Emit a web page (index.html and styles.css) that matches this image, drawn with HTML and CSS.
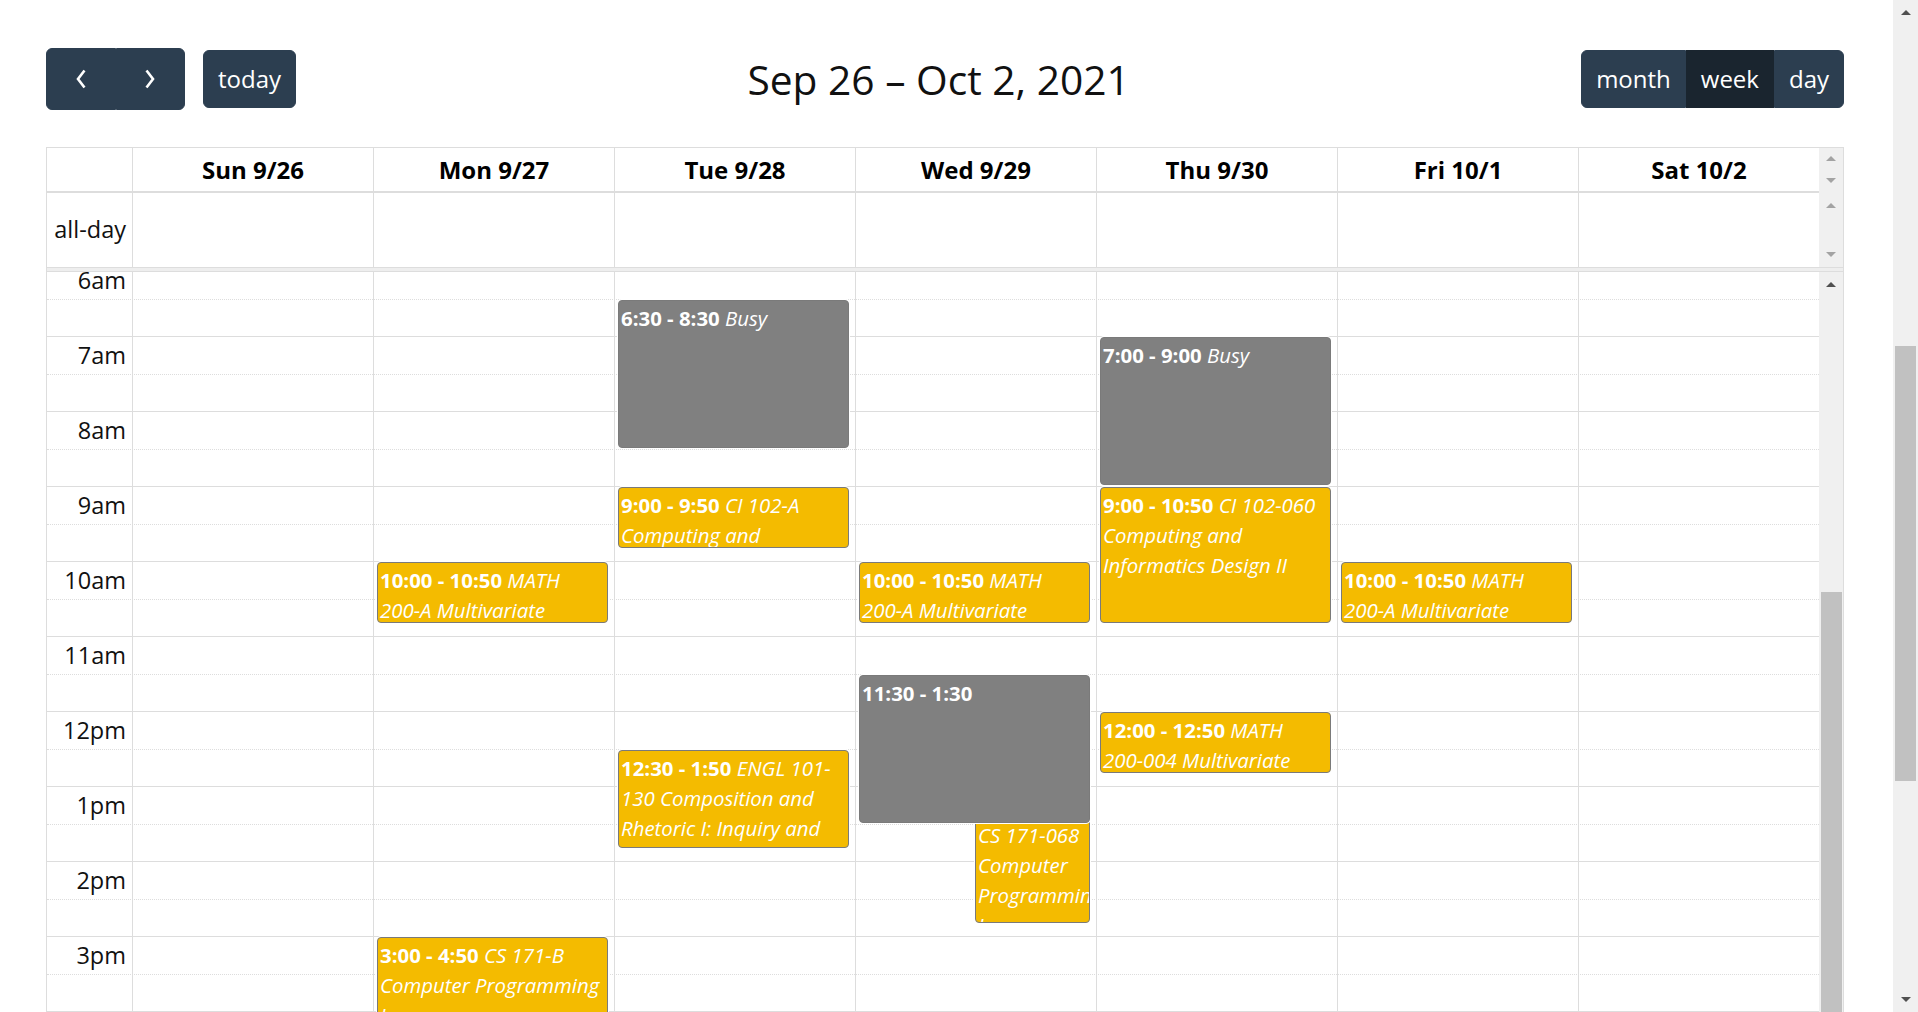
FILE: index.html
```html
<!DOCTYPE html>
<html lang="en">
<head>
<meta charset="utf-8">
<title>Week schedule</title>
<link rel="stylesheet" href="styles.css">
</head>
<body>
<div class="page">
  <main class="main">
    <div class="toolbar">
      <div class="tb-chunk">
        <div class="btn-group">
          <button class="btn btn-icon" aria-label="prev"><svg width="10" height="20" viewBox="0 0 10 20"><polyline points="8.5,1.5 2,10 8.5,18.5" fill="none" stroke="#fff" stroke-width="2.6"/></svg></button>
          <button class="btn btn-icon" aria-label="next"><svg width="10" height="20" viewBox="0 0 10 20"><polyline points="1.5,1.5 8,10 1.5,18.5" fill="none" stroke="#fff" stroke-width="2.6"/></svg></button>
        </div>
        <button class="btn">today</button>
      </div>
      <h2 class="title">Sep 26 – Oct 2, 2021</h2>
      <div class="tb-chunk">
        <div class="btn-group">
          <button class="btn">month</button>
          <button class="btn active">week</button>
          <button class="btn">day</button>
        </div>
      </div>
    </div>

    <div class="cal">
      <div class="row head">
        <div class="axis"></div>
        <div class="day-h">Sun 9/26</div>
        <div class="day-h">Mon 9/27</div>
        <div class="day-h">Tue 9/28</div>
        <div class="day-h">Wed 9/29</div>
        <div class="day-h">Thu 9/30</div>
        <div class="day-h">Fri 10/1</div>
        <div class="day-h">Sat 10/2</div>
        <div class="gutter gutter-head">
          <span class="sb-btn small"><span class="tri up light"></span></span>
          <span class="sb-btn small"><span class="tri down light"></span></span>
        </div>
      </div>
      <div class="row allday">
        <div class="axis allday-label">all-day</div>
        <div class="day-c"></div>
        <div class="day-c"></div>
        <div class="day-c"></div>
        <div class="day-c"></div>
        <div class="day-c"></div>
        <div class="day-c"></div>
        <div class="day-c"></div>
        <div class="gutter gutter-allday">
          <span class="sb-btn"><span class="tri up light"></span></span>
          <span class="sb-btn"><span class="tri down light"></span></span>
        </div>
      </div>
      <div class="divider"></div>

      <div class="tg">
        <div class="tg-view">
          <div class="tg-inner">
            <div class="slats">
              <div class="slat"><span class="slat-label">6am</span></div>
              <div class="slat half"></div>
              <div class="slat"><span class="slat-label">7am</span></div>
              <div class="slat half"></div>
              <div class="slat"><span class="slat-label">8am</span></div>
              <div class="slat half"></div>
              <div class="slat"><span class="slat-label">9am</span></div>
              <div class="slat half"></div>
              <div class="slat"><span class="slat-label">10am</span></div>
              <div class="slat half"></div>
              <div class="slat"><span class="slat-label">11am</span></div>
              <div class="slat half"></div>
              <div class="slat"><span class="slat-label">12pm</span></div>
              <div class="slat half"></div>
              <div class="slat"><span class="slat-label">1pm</span></div>
              <div class="slat half"></div>
              <div class="slat"><span class="slat-label">2pm</span></div>
              <div class="slat half"></div>
              <div class="slat"><span class="slat-label">3pm</span></div>
              <div class="slat half"></div>
              <div class="slat"><span class="slat-label">4pm</span></div>
              <div class="slat half"></div>
            </div>

            <div class="cols">
              <div class="col"></div>
              <div class="col">
                <div class="ev yellow" style="top:301px;height:60.5px"><b>10:00 - 10:50</b> <i>MATH 200-A Multivariate Calculus</i></div>
                <div class="ev yellow" style="top:676px;height:135.5px"><b>3:00 - 4:50</b> <i>CS 171-B Computer Programming I</i></div>
              </div>
              <div class="col">
                <div class="ev gray" style="top:38.5px;height:148px"><b>6:30 - 8:30</b> <i>Busy</i></div>
                <div class="ev yellow" style="top:226px;height:60.5px"><b>9:00 - 9:50</b> <i>CI 102-A Computing and Informatics Design II</i></div>
                <div class="ev yellow" style="top:488.5px;height:98px"><b>12:30 - 1:50</b> <i>ENGL 101-130 Composition and Rhetoric I: Inquiry and Exploratory Research</i></div>
              </div>
              <div class="col">
                <div class="ev yellow" style="top:301px;height:60.5px"><b>10:00 - 10:50</b> <i>MATH 200-A Multivariate Calculus</i></div>
                <div class="ev yellow ev-right" style="top:526px;height:135.5px"><b>1:00 - 2:50</b> <i>CS 171-068 Computer Programming I</i></div>
                <div class="ev gray ev-top" style="top:413.5px;height:148px"><b>11:30 - 1:30</b></div>
              </div>
              <div class="col">
                <div class="ev gray" style="top:76px;height:148px"><b>7:00 - 9:00</b> <i>Busy</i></div>
                <div class="ev yellow" style="top:226px;height:135.5px"><b>9:00 - 10:50</b> <i>CI 102-060 Computing and Informatics Design II</i></div>
                <div class="ev yellow" style="top:451px;height:60.5px"><b>12:00 - 12:50</b> <i>MATH 200-004 Multivariate Calculus</i></div>
              </div>
              <div class="col">
                <div class="ev yellow" style="top:301px;height:60.5px"><b>10:00 - 10:50</b> <i>MATH 200-A Multivariate Calculus</i></div>
              </div>
              <div class="col"></div>
            </div>
          </div>
        </div>
        <div class="gutter gutter-tg">
          <span class="sb-btn"><span class="tri up dark"></span></span>
          <div class="tg-thumb"></div>
        </div>
      </div>
    </div>
  </main>

  <div class="page-scroll">
    <span class="sb-btn page-btn"><span class="tri up dark"></span></span>
    <div class="ps-track"><div class="ps-thumb"></div></div>
    <span class="sb-btn page-btn"><span class="tri down dark"></span></span>
  </div>
</div>
</body>
</html>
```

FILE: styles.css
```css
* { box-sizing: border-box; }

html, body {
  margin: 0;
  height: 1012px;
  overflow: hidden;
}

body {
  font-family: "Open Sans", "Noto Sans", sans-serif;
  color: #000;
  background: #fff;
}

.page {
  display: flex;
  height: 1012px;
}

.main {
  flex: 1;
  min-width: 0;
  padding: 48px 49px 0 46px;
}

/* ---------- toolbar ---------- */
.toolbar {
  display: flex;
  justify-content: space-between;
  align-items: center;
  height: 62px;
  margin-bottom: 37px;
}

.tb-chunk {
  display: flex;
  align-items: center;
  gap: 18px;
}

.btn-group { display: flex; }

.btn {
  font-family: inherit;
  font-size: 24px;
  line-height: 36px;
  height: 58px;
  padding: 10px 14px;
  color: #fff;
  background: #2c3e50;
  border: 1px solid #2c3e50;
  border-radius: 6px;
}

.btn-group .btn { border-radius: 0; }
.btn-group .btn:first-child { border-radius: 6px 0 0 6px; }
.btn-group .btn:last-child { border-radius: 0 6px 6px 0; }

.btn.active {
  background: #1a252f;
  border-color: #1a252f;
}

.btn-icon {
  width: 69.5px;
  height: 62px;
  padding: 0;
  display: flex;
  align-items: center;
  justify-content: center;
}

.title {
  margin: 0;
  font-size: 40.7px;
  font-weight: 400;
  line-height: 1.2;
  color: #111;
}

/* ---------- calendar ---------- */
.cal {
  border: 1px solid #ddd;
  border-bottom: 0;
}

.row {
  display: grid;
  grid-template-columns: 85px repeat(7, 241px) 24px;
}

.head {
  height: 45px;
}

.head .axis,
.head .day-h {
  border-bottom: 2px solid #ddd;
}

.day-h {
  border-left: 1px solid #ddd;
  display: flex;
  align-items: center;
  justify-content: center;
  font-size: 24px;
  font-weight: 700;
}

.allday {
  height: 75px;
  border-bottom: 1px solid #ddd;
}

.day-c {
  border-left: 1px solid #ddd;
}

.allday-label {
  font-size: 23.5px;
  display: flex;
  align-items: center;
  justify-content: flex-end;
  padding-right: 6px;
  padding-bottom: 2px;
  color: #111;
}

.divider {
  height: 4px;
  background: #eee;
  border-bottom: 1px solid #ddd;
}

/* scrollbar gutters */
.gutter {
  background: #f0f0f0;
  display: flex;
  flex-direction: column;
}

.gutter-allday { justify-content: space-between; }

.sb-btn {
  height: 25px;
  flex: none;
  display: flex;
  align-items: center;
  justify-content: center;
}

.sb-btn.small { height: 21.5px; }

.tri {
  width: 0;
  height: 0;
  border-left: 5px solid transparent;
  border-right: 5px solid transparent;
}

.tri.up { border-bottom: 5px solid #a3a3a3; }
.tri.down { border-top: 5px solid #a3a3a3; }
.tri.up.dark { border-bottom-color: #505050; }
.tri.down.dark { border-top-color: #505050; }

/* ---------- time grid ---------- */
.tg {
  display: flex;
  height: 741px;
}

.tg-view {
  flex: 1;
  overflow: hidden;
}

.tg-inner {
  position: relative;
  margin-top: -11px;
}

.slat {
  height: 37.5px;
  border-top: 1px solid #ddd;
}

.slat.half {
  border-top-style: dotted;
}

.slat-label {
  display: block;
  width: 85px;
  text-align: right;
  padding-right: 6px;
  font-size: 23.5px;
  line-height: 37px;
  color: #111;
}

.cols {
  position: absolute;
  top: 0;
  bottom: 0;
  left: 85px;
  right: 0;
  display: grid;
  grid-template-columns: repeat(7, 241px);
}

.col {
  position: relative;
  border-left: 1px solid #ddd;
}

.gutter-tg {
  width: 24px;
  flex: none;
}

.tg-thumb {
  margin: 295px 1px 0 2px;
  flex: 1;
  background: #c1c1c1;
}

/* ---------- events ---------- */
.ev {
  position: absolute;
  left: 3px;
  right: 6px;
  padding: 2px 2px 0;
  border: 1px solid #7a7a7a;
  border-radius: 4px;
  box-shadow: 0 0 0 1px #fff;
  overflow: hidden;
  color: #fff;
  font-size: 20.4px;
  line-height: 30px;
}

.ev b { font-weight: 700; }
.ev i { font-style: italic; }

.ev.yellow { background: #f4bb00; }
.ev.gray { background: #808080; z-index: 1; }

.ev-right { left: 119px; }
.ev-top { z-index: 2; }

/* ---------- page scrollbar ---------- */
.page-scroll {
  width: 25px;
  flex: none;
  background: #f0f0f0;
  display: flex;
  flex-direction: column;
}

.ps-track {
  flex: 1;
  padding: 321px 2px 0;
}

.ps-thumb {
  height: 435px;
  background: #c1c1c1;
}
```
